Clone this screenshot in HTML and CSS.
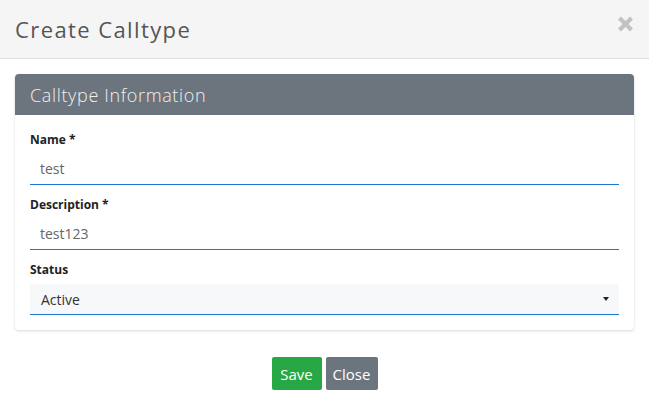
FILE: index.html
```html
<!DOCTYPE html>
<html>
<head>
<meta charset="utf-8">
<link rel="stylesheet" href="styles.css">
</head>
<body>
<div class="modal">
  <div class="modal-header">
    <h4 class="modal-title">Create Calltype</h4>
    <span class="close"><svg width="17" height="16" viewBox="0 0 17 16"><path d="M2.5 2 L14.5 14 M14.5 2 L2.5 14" stroke="#c2c2c2" stroke-width="4.2" stroke-linecap="butt"/></svg></span>
  </div>
  <div class="modal-body">
    <div class="card">
      <div class="card-header">Calltype Information</div>
      <div class="card-body">
        <div class="group">
          <label class="label">Name *</label>
          <div class="input">test</div>
        </div>
        <div class="group">
          <label class="label">Description *</label>
          <div class="input">test123</div>
        </div>
        <div class="group last">
          <label class="label">Status</label>
          <div class="select"><span>Active</span><span class="caret"></span></div>
        </div>
      </div>
    </div>
  </div>
  <div class="modal-footer">
    <button class="btn btn-save">Save</button>
    <button class="btn btn-close">Close</button>
  </div>
</div>
</body>
</html>
```
FILE: styles.css
```css
html, body {
  margin: 0;
  padding: 0;
  background: #ffffff;
}
body {
  font-family: "Open Sans", "Noto Sans", sans-serif;
  color: #333;
}
.modal-header {
  height: 58px;
  background: #f5f5f5;
  border-bottom: 1px solid #dddddd;
  display: flex;
  align-items: center;
  justify-content: space-between;
  padding: 0 15px 0 15px;
}
.modal-title {
  margin: 0;
  font-weight: 400;
  font-size: 22px;
  color: #555555;
  letter-spacing: 1.4px;
}
.close {
  display: flex;
  position: relative;
  top: -5px;
}
.modal-body {
  padding: 15px 15px 0 15px;
}
.card {
  border-radius: 4px;
  box-shadow: 0 1px 3px rgba(0,0,0,0.16);
  background: #fff;
}
.card-header {
  background: #6c747d;
  color: #f0f0f0;
  height: 41px;
  display: flex;
  align-items: center;
  padding: 0 15px;
  font-size: 18px;
  font-weight: 300;
  letter-spacing: 0.65px;
  border-radius: 4px 4px 0 0;
}
.card-body {
  padding: 16px 15px 15px 15px;
}
.group {
  margin-bottom: 11px;
}
.group.last {
  margin-bottom: 0;
}
.label {
  display: block;
  font-size: 12px;
  line-height: 16px;
  height: 16px;
  padding-top: 1px;
  box-sizing: border-box;
  font-weight: 700;
  color: #222;
  margin-bottom: 6px;
}
.group.last .label {
  margin-bottom: 7px;
}
.input {
  height: 31px;
  border-bottom: 1px solid #1976d2;
  padding: 0 10px;
  display: flex;
  align-items: center;
  font-size: 14px;
  color: #666;
}
.select {
  height: 30px;
  background: #f7f8fa;
  border-bottom: 1px solid #1976d2;
  padding: 0 10px 0 11px;
  display: flex;
  align-items: center;
  justify-content: space-between;
  font-size: 14px;
  color: #333;
}
.caret {
  width: 0;
  height: 0;
  border-left: 3px solid transparent;
  border-right: 3px solid transparent;
  border-top: 4px solid #222;
}
.modal-footer {
  display: flex;
  justify-content: center;
  gap: 4px;
  padding-top: 27px;
}
.btn {
  font-family: "Open Sans", "Noto Sans", sans-serif;
  font-size: 15px;
  color: #fff;
  border: none;
  border-radius: 2px;
  height: 33px;
  padding: 0 4px;
}
.btn-save {
  background: #28a745;
  width: 50px;
}
.btn-close {
  background: #6c757d;
  width: 52px;
}
```
